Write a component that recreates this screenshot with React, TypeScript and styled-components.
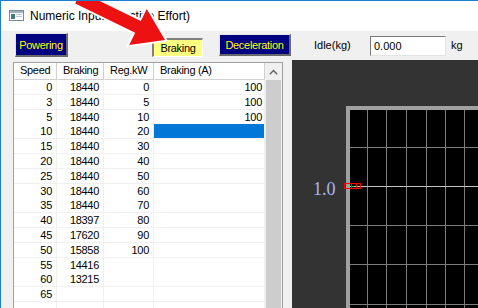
import React from "react";
import styled, { createGlobalStyle } from "styled-components";

const GlobalStyle = createGlobalStyle`
  html, body {
    margin: 0;
    padding: 0;
    background: #f0f0f0;
  }
  body {
    font-family: "Liberation Sans", Arial, sans-serif;
  }
`;

type Row = (number | null)[];

const rows: Row[] = [
  [0, 18440, 0, 100],
  [3, 18440, 5, 100],
  [5, 18440, 10, 100],
  [10, 18440, 20, null],
  [15, 18440, 30, null],
  [20, 18440, 40, null],
  [25, 18440, 50, null],
  [30, 18440, 60, null],
  [35, 18440, 70, null],
  [40, 18397, 80, null],
  [45, 17620, 90, null],
  [50, 15858, 100, null],
  [55, 14416, null, null],
  [60, 13215, null, null],
  [65, null, null, null],
  [null, null, null, null],
];

const headers = ["Speed", "Braking", "Reg.kW", "Braking (A)"];

const App: React.FC = () => {
  return (
    <Window>
      <GlobalStyle />
      <TitleBar>
        <AppIcon width="15" height="11" viewBox="0 0 15 11">
          <rect x="0.5" y="0.5" width="14" height="10" fill="#fff" stroke="#7a8a94" />
          <rect x="1" y="1" width="13" height="2" fill="#9fb2bf" />
          <rect x="2" y="4" width="4" height="5" fill="#3c7d86" />
          <rect x="7" y="4" width="6" height="1" fill="#c0c8cc" />
          <rect x="7" y="6" width="6" height="1" fill="#c0c8cc" />
        </AppIcon>
        <Title>Numeric Input (Tractive Effort)</Title>
      </TitleBar>

      <Client>
        <Toolbar>
          <ModeButton $ml={14} $mt={2} $w={53} $h={24}>
            Powering
          </ModeButton>
          <ModeButton $active $ml={84} $mt={7} $w={51} $h={19}>
            Braking
          </ModeButton>
          <ModeButton $ml={16} $mt={3} $w={72} $h={22}>
            Deceleration
          </ModeButton>
          <FieldLabel>Idle(kg)</FieldLabel>
          <ValueBox>0.000</ValueBox>
          <Unit>kg</Unit>
        </Toolbar>

        <Body>
          <TableFrame>
            <Grid>
              <HeaderRow>
                {headers.map((h) => (
                  <HeaderCell key={h}>{h}</HeaderCell>
                ))}
              </HeaderRow>
              {rows.map((r, i) => (
                <DataRow key={i}>
                  {r.map((v, j) => (
                    <Cell key={j} $last={j === 3} $selected={i === 3 && j === 3}>
                      {v === null ? "" : v}
                    </Cell>
                  ))}
                </DataRow>
              ))}
            </Grid>
            <ScrollBar>
              <ScrollUp>
                <svg width="9" height="6" viewBox="0 0 9 6">
                  <path d="M0.8 5.2 L4.5 1.5 L8.2 5.2" fill="none" stroke="#606060" strokeWidth="1.4" />
                </svg>
              </ScrollUp>
              <ScrollThumb />
            </ScrollBar>
          </TableFrame>

          <ChartPanel>
            <svg width="100%" height="100%">
              <rect x="54" y="46" width="200" height="260" fill="#a0a0a0" />
              <rect x="58" y="50" width="200" height="260" fill="#000" />
              {[75, 94, 114, 134, 153, 172].map((x) => (
                <line key={x} x1={x + 0.5} y1="50" x2={x + 0.5} y2="260" stroke="#7c7c7c" />
              ))}
              {[87, 165, 204, 244].map((y) => (
                <line key={y} x1="58" y1={y + 0.5} x2="200" y2={y + 0.5} stroke="#7c7c7c" />
              ))}
              <line x1="58" y1="126.5" x2="200" y2="126.5" stroke="#c4c4c4" />
              <text
                x="21"
                y="135"
                fill="#a9b8ee"
                fontFamily="'Liberation Serif', 'Times New Roman', serif"
                fontSize="18"
              >
                1.0
              </text>
              <rect x="52.5" y="123.5" width="16" height="5" fill="none" stroke="#ff0000" />
              <line x1="59.5" y1="124" x2="59.5" y2="128" stroke="#ff0000" />
              <line x1="64.5" y1="124" x2="64.5" y2="128" stroke="#ff0000" />
              <rect x="55" y="126" width="2" height="1" fill="#00ff40" />
              <rect x="60" y="126" width="2" height="1" fill="#00ff40" />
            </svg>
          </ChartPanel>
        </Body>
      </Client>

      <Pointer width="200" height="50" viewBox="0 0 200 50">
        <polygon
          points="80.8,-8.2 140.8,21.1 146.8,8.9 165,40 129.2,44.9 135.2,32.7 75.2,3.4"
          fill="#ee1111"
          stroke="#ffffff"
          strokeWidth="4"
          strokeLinejoin="miter"
          paintOrder="stroke"
        />
      </Pointer>
    </Window>
  );
};

export default App;

const Window = styled.div`
  position: relative;
  width: 478px;
  height: 308px;
  box-sizing: border-box;
  overflow: hidden;
  display: flex;
  flex-direction: column;
  border-left: 1px solid #1a7fd4;
  border-top: 1px solid #1a7fd4;
  background: #f0f0f0;
`;

const TitleBar = styled.div`
  height: 30px;
  flex: none;
  display: flex;
  align-items: center;
  padding-left: 8px;
  background: #ffffff;
`;

const AppIcon = styled.svg`
  flex: none;
  margin-right: 6px;
  margin-top: -1px;
`;

const Title = styled.span`
  font-size: 12px;
  color: #000;
  margin-top: -1px;
`;

const Client = styled.div`
  flex: 1;
  min-height: 0;
  display: flex;
  flex-direction: column;
`;

const Toolbar = styled.div`
  height: 29px;
  flex: none;
  display: flex;
  align-items: flex-start;
  font-size: 11px;
`;

const ModeButton = styled.div<{ $active?: boolean; $ml: number; $mt: number; $w: number; $h: number }>`
  flex: none;
  box-sizing: border-box;
  margin-left: ${(p) => p.$ml}px;
  margin-top: ${(p) => p.$mt}px;
  width: ${(p) => p.$w}px;
  height: ${(p) => p.$h}px;
  display: flex;
  align-items: center;
  justify-content: center;
  letter-spacing: -0.3px;
  background: ${(p) => (p.$active ? "#ffff80" : "#000080")};
  color: ${(p) => (p.$active ? "#000" : "#ffff00")};
  border-style: solid;
  border-width: ${(p) => (p.$active ? "2px 1px 1px 2px" : "1px 2px 2px 1px")};
  border-color: ${(p) =>
    p.$active ? "#808080 #ffffff #ffffff #808080" : "#e3e3e3 #696969 #696969 #e3e3e3"};
`;

const FieldLabel = styled.span`
  flex: none;
  width: 56px;
  margin-left: 23px;
  margin-top: 8px;
  color: #000;
`;

const ValueBox = styled.div`
  flex: none;
  box-sizing: border-box;
  width: 76px;
  height: 20px;
  margin-top: 5px;
  padding: 3px 0 0 3px;
  background: #fff;
  border-style: solid;
  border-width: 1px;
  border-color: #7a7a7a #e3e3e3 #e3e3e3 #7a7a7a;
  color: #000;
`;

const Unit = styled.span`
  flex: none;
  margin-left: 5px;
  margin-top: 8px;
`;

const Body = styled.div`
  flex: 1;
  min-height: 0;
  display: flex;
  padding-left: 12px;
`;

const TableFrame = styled.div`
  flex: none;
  width: 270px;
  box-sizing: border-box;
  margin-top: 2px;
  display: flex;
  background: #fff;
  border-top: 1px solid #a0a0a0;
  border-left: 1px solid #a0a0a0;
  border-right: 1px solid #a0a0a0;
`;

const Grid = styled.div`
  width: 251px;
  flex: none;
  display: flex;
  flex-direction: column;
  font-size: 11px;
  letter-spacing: -0.3px;
  color: #000;
`;

const columns = "43px 47px 50px 111px";

const HeaderRow = styled.div`
  display: grid;
  grid-template-columns: ${columns};
  height: 17px;
  flex: none;
`;

const HeaderCell = styled.div`
  box-sizing: border-box;
  padding-left: 5px;
  line-height: 15px;
  background: #fff;
  border-right: 1px solid #d0d0d0;
  border-bottom: 1px solid #d0d0d0;
  border-left: 1px solid #ffffff;
`;

const DataRow = styled.div`
  display: grid;
  grid-template-columns: ${columns};
  height: 14.8px;
  flex: none;
`;

const Cell = styled.div<{ $last?: boolean; $selected?: boolean }>`
  box-sizing: border-box;
  text-align: right;
  padding-right: ${(p) => (p.$last ? 2 : 4)}px;
  line-height: 14px;
  background: ${(p) => (p.$selected ? "#0078d7" : "#fff")};
  border-right: 1px solid #f0f0f0;
  border-bottom: 1px solid #f0f0f0;
`;

const ScrollBar = styled.div`
  width: 17px;
  flex: none;
  display: flex;
  flex-direction: column;
  background: #f0f0f0;
`;

const ScrollUp = styled.div`
  height: 17px;
  flex: none;
  display: flex;
  align-items: center;
  justify-content: center;
`;

const ScrollThumb = styled.div`
  flex: 1;
  margin: 0 1px 0 1px;
  background: #cdcdcd;
`;

const ChartPanel = styled.div`
  flex: 1;
  margin-left: 9px;
  background: #333333;
  overflow: hidden;
`;

const Pointer = styled.svg`
  position: absolute;
  left: -1px;
  top: -1px;
  pointer-events: none;
  overflow: visible;
`;
